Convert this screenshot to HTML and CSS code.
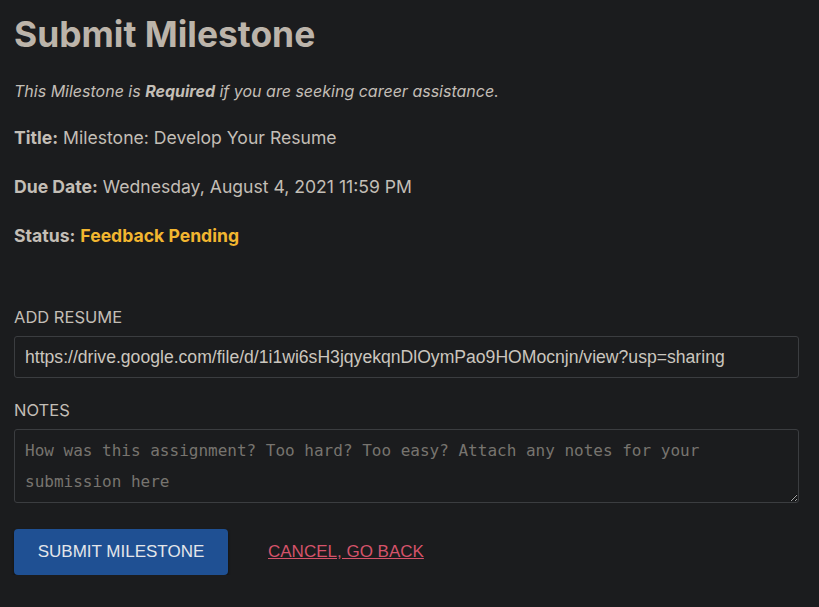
FILE: index.html
```html
<!DOCTYPE html>
<html>
<head>
<meta charset="utf-8">
<link rel="stylesheet" href="styles.css">
</head>
<body>
<main class="page">
  <h1 class="title">Submit Milestone</h1>
  <p class="note">This Milestone is <strong>Required</strong> if you are seeking career assistance.</p>
  <div class="details">
    <p class="info"><strong>Title:</strong> Milestone: Develop Your Resume</p>
    <p class="info"><strong>Due Date:</strong> Wednesday, August 4, 2021 11:59 PM</p>
    <p class="info"><strong>Status:</strong> <strong class="pending">Feedback Pending</strong></p>
  </div>
  <form class="form">
    <label class="label" for="resume">ADD RESUME</label>
    <input class="input" id="resume" type="text" value="https://drive.google.com/file/d/1i1wi6sH3jqyekqnDlOymPao9HOMocnjn/view?usp=sharing">
    <label class="label" for="notes">NOTES</label>
    <textarea class="textarea" id="notes" placeholder="How was this assignment? Too hard? Too easy? Attach any notes for your submission here"></textarea>
    <div class="actions">
      <button class="btn" type="button">SUBMIT MILESTONE</button>
      <a class="cancel" href="#">CANCEL, GO BACK</a>
    </div>
  </form>
</main>
</body>
</html>
```
FILE: styles.css
```css
html, body {
  margin: 0;
  padding: 0;
  background: #1b1c1e;
}
body {
  font-family: Inter, "Noto Sans", sans-serif;
  color: #c3beb6;
}
.page {
  padding: 14px 20px 0 14px;
}
.title {
  margin: 0;
  font-size: 35.4px;
  line-height: 42px;
  font-weight: 700;
  color: #bcb4aa;
}
.note {
  margin: 24px 0 0;
  font-size: 16px;
  font-style: italic;
  line-height: 22px;
}
.details {
  display: flex;
  flex-direction: column;
  gap: 24px;
  margin-top: 23px;
}
.info {
  margin: 0;
  font-size: 17.6px;
  line-height: 25px;
}
.info strong { font-weight: 700; }
.pending { color: #f2b630; }
.form {
  display: flex;
  flex-direction: column;
  margin-top: 59px;
}
.label {
  font-size: 16.5px;
  line-height: 20px;
  color: #c3beb6;
}
.input {
  margin-top: 9px;
  height: 42px;
  box-sizing: border-box;
  background: #1b1c1e;
  border: 1px solid #3b3d40;
  border-radius: 3px;
  padding: 0 10px;
  font-family: "Liberation Sans", Arial, sans-serif;
  font-size: 17.6px;
  color: #cbc6bf;
  outline: none;
}
.input + .label { margin-top: 22px; }
.textarea {
  margin-top: 9px;
  height: 74px;
  box-sizing: border-box;
  background: #1b1c1e;
  border: 1px solid #3b3d40;
  border-radius: 3px;
  padding: 5px 10px;
  font-family: "DejaVu Sans Mono", monospace;
  font-size: 16px;
  line-height: 31px;
  color: #c3beb6;
  resize: vertical;
  outline: none;
}
.textarea::placeholder { color: #77746f; }
.actions {
  display: flex;
  align-items: center;
  gap: 40px;
  margin-top: 26px;
}
.btn {
  width: 214px;
  height: 46px;
  background: #1f5093;
  color: #e4e6ea;
  border: none;
  border-radius: 4px;
  box-shadow: 0 2px 3px rgba(0,0,0,0.5);
  font-family: "Liberation Sans", Arial, sans-serif;
  font-size: 17px;
}
.cancel {
  font-family: "Liberation Sans", Arial, sans-serif;
  font-size: 17px;
  color: #d5536a;
  text-decoration: underline;
}
```
